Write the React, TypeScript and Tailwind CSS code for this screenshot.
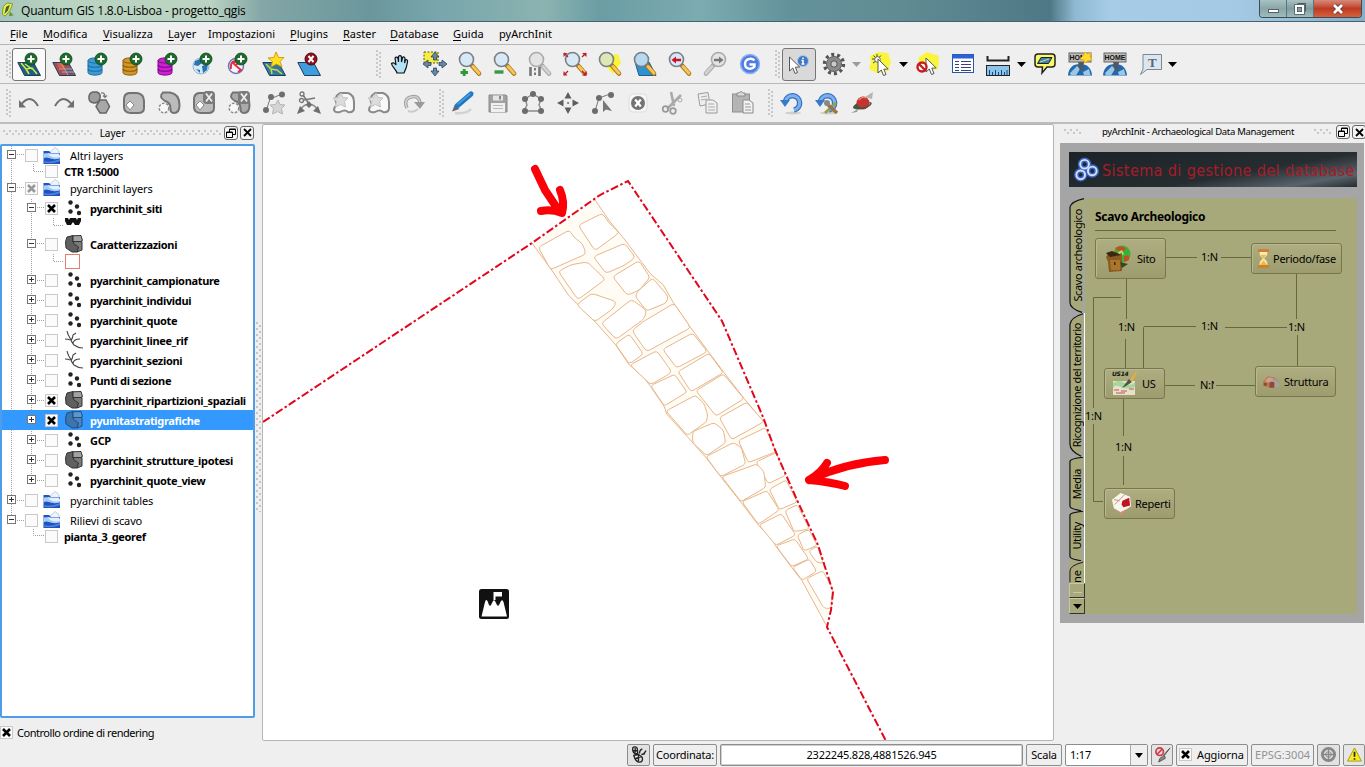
import React, { ReactNode } from "react";

type Pt = [number, number];

/* ---------- geometry helpers ---------- */

function roundedPath(points: Pt[], radius: number): string {
  const n = points.length;
  return (
    points
      .map((p, i) => {
        const a = points[(i + n - 1) % n];
        const b = points[(i + 1) % n];
        const toward = (q: Pt): Pt => {
          const len = Math.hypot(q[0] - p[0], q[1] - p[1]);
          const r = Math.min(radius, len / 2);
          return [p[0] + ((q[0] - p[0]) * r) / len, p[1] + ((q[1] - p[1]) * r) / len];
        };
        const s = toward(a);
        const e = toward(b);
        return `${i === 0 ? "M" : "L"}${s[0]} ${s[1]}Q${p[0]} ${p[1]} ${e[0]} ${e[1]}`;
      })
      .join("") + "Z"
  );
}

const upperStones: Pt[][] = [
  [[115, 292], [208, 240], [222, 262], [248, 282], [258, 312], [152, 359]],
  [[235, 226], [307, 190], [330, 222], [358, 248], [285, 302]],
  [[280, 320], [374, 280], [406, 322], [375, 345], [318, 370]],
  [[175, 364], [214, 344], [262, 336], [316, 388], [234, 449]],
  [[338, 380], [417, 332], [450, 382], [418, 420], [382, 436]],
  [[405, 438], [415, 422], [458, 384], [505, 440], [500, 458], [440, 483]],
  [[230, 464], [275, 430], [349, 455], [340, 475], [285, 515]],
  [[304, 520], [395, 448], [440, 482], [432, 507], [348, 568]],
  [[396, 542], [428, 516], [522, 460], [572, 533], [440, 605]],
  [[346, 582], [388, 552], [430, 612], [388, 642]],
  [[488, 598], [578, 549], [622, 605], [530, 654]],
  [[390, 645], [470, 602], [513, 662], [508, 672], [452, 704]],
];

const lowerStones: Pt[][] = [
  [[114, 65], [207, 10], [250, 68], [153, 125]],
  [[32, 107], [104, 73], [141, 126], [73, 168]],
  [[168, 122], [250, 72], [312, 146], [228, 198]],
  [[78, 183], [166, 136], [192, 160], [203, 195], [200, 215], [142, 256]],
  [[238, 203], [320, 157], [372, 215], [275, 269]],
  [[158, 245], [222, 218], [250, 240], [257, 278], [200, 317], [158, 278]],
  [[295, 272], [376, 233], [408, 305], [325, 338]],
  [[198, 320], [280, 278], [304, 292], [317, 342], [242, 380]],
  [[348, 336], [408, 308], [438, 375], [385, 401]],
  [[245, 380], [350, 342], [372, 365], [377, 412], [303, 455]],
  [[388, 418], [438, 390], [472, 456], [418, 479]],
  [[306, 455], [381, 422], [418, 480], [355, 523]],
  [[435, 482], [472, 464], [508, 537], [462, 545]],
  [[357, 525], [424, 491], [467, 555], [408, 586]],
  [[472, 555], [506, 538], [532, 586], [492, 603]],
  [[408, 588], [465, 567], [506, 627], [455, 650]],
  [[506, 603], [532, 588], [550, 640], [530, 637]],
  [[458, 652], [508, 627], [530, 664], [486, 691]],
  [[500, 686], [548, 662], [578, 716], [574, 775], [552, 775]],
];

function MapCanvas() {
  return (
    <svg className="block h-full w-full" viewBox="263 125 790 615" preserveAspectRatio="xMinYMin slice">
      <g stroke="#e4ae7c" strokeWidth="2.700">
        <g transform="translate(500 150) scale(.33333)">
          <path
            fill="#fffcf6"
            d="M95 278L155 360L205 435L285 515L345 582L388 645L430 680L452 710L493 770L500 792L562 860L620 925L662 980L723 1057L775 1125L810 1160L830 1192L875 1252L906 1292L980 1428L995 1350L998 1320L960 1220L890 1060L790 815L732 745L670 665L625 605L572 533L520 458L490 405L450 370L375 270L330 215L285 150Z"
            stroke="none"
          />
          <path
            fill="none"
            d="M95 278L155 360L205 435L285 515L345 582L388 645L430 680L452 710L493 770L500 792L562 860L620 925L662 980L723 1057L775 1125L810 1160L830 1192L875 1252L906 1292L980 1428M285 150L330 215L375 270L450 370L490 405L520 458L572 533L625 605L670 665L732 745L790 815"
          />
          {upperStones.map((s, i) => (
            <path key={i} fill="#fff" d={roundedPath(s, 10)} />
          ))}
        </g>
        <g transform="translate(640 350) scale(.33333)">
          {lowerStones.map((s, i) => (
            <path key={i} fill="#fff" d={roundedPath(s, 8)} />
          ))}
        </g>
      </g>
      <path
        d="M263 422L532 243L600 195L628 181L722 321L763 417L775 450L797 500L818 545L833 592L831 610L827 627L886 741"
        fill="none"
        stroke="#e2071c"
        strokeWidth="2"
        strokeDasharray="8 2.500 2.500 2.500"
      />
      <g fill="none" stroke="#fb0007" strokeWidth="8" strokeLinecap="round" strokeLinejoin="round">
        <path d="M535 169L545 190L557 208M560 190Q565 202 562 213Q552 209 541 211" />
        <path d="M885 460Q845 463 809 480M827 463Q821 473 809 480Q830 482 845 486" />
      </g>
      <rect x="479" y="589" width="30" height="30" rx="2.500" fill="#111" />
      <path d="M481.500 616.500L485 602Q486 598.500 487.500 601L489 605Q490 606.500 491 605L493 601Q494 599.500 495 601L497 605Q498 606.500 499 605L501 601Q502.500 599 503.500 602L507 616.500Z" fill="#fff" />
      <path d="M493.500 592H502V596.500H495.500V600H493.500Z" fill="#fff" />
    </svg>
  );
}

/* ---------- toolbar icons (24px grid) ---------- */

const Svg = ({ children, size = "h-6 w-6" }: { children: ReactNode; size?: string }) => (
  <svg viewBox="0 0 24 24" className={`${size} shrink-0 overflow-visible`} fill="none">
    {children}
  </svg>
);

const Plus = ({ y = 7 }: { y?: number }) => (
  <g transform={`translate(14 ${y})`}>
    <circle r="6" fill="#1c6b2c" stroke="#0d4519" strokeWidth=".8" />
    <path d="M-3.5 0H3.5M0-3.5V3.5" stroke="#fff" strokeWidth="2" />
  </g>
);

const Sheet = ({ fill }: { fill: string }) => (
  <path d="M.8 10.500H16.500L23.500 23.500H7.500Z" fill={fill} stroke="#223c5c" strokeWidth="1" />
);

const AddVector = () => (
  <Svg>
    <Sheet fill="#1d5f86" />
    <path d="M4 11L9 17L15 16L20 22M9 17L12 22M8 12L15 17" stroke="#d8ec38" strokeWidth="1.500" />
    <Plus />
  </Svg>
);
const AddRaster = () => (
  <Svg>
    <Sheet fill="#a05058" />
    <path d="M5 11H11L13 16H7Z" fill="#d65a4c" />
    <path d="M12 16H18L21 22H15Z" fill="#3c5f86" />
    <path d="M7 17H20M10 20H22M9 11L16 23" stroke="#d99a92" />
    <Plus />
  </Svg>
);
const Db = ({ fill, dark }: { fill: string; dark: string }) => (
  <Svg>
    <path d="M1 8.500V20.500C1 24 15 24 15 20.500V8.500Z" fill={fill} stroke={dark} />
    <ellipse cx="8" cy="8.500" rx="7" ry="2.600" fill={fill} stroke={dark} />
    <path d="M1 13C2 16 14 16 15 13M1 17C2 20 14 20 15 17" stroke={dark} strokeWidth="1.200" />
    <Plus />
  </Svg>
);
const AddWms = () => (
  <Svg>
    <circle cx="9" cy="14" r="8" fill="#d8e9f6" stroke="#8eb4d4" />
    <path d="M3 9L8 7L10 11L6 14L2 13ZM10 14L16 12L15 18L11 21ZM4 17L8 18L8 21Z" fill="#2873b4" />
    <Plus />
  </Svg>
);
const AddWfs = () => (
  <Svg>
    <circle cx="9" cy="14" r="7.500" fill="#f7f3f8" stroke="#6c74bc" strokeWidth="1.500" />
    <path d="M4 17Q3 10 8 9L12 11L8 13L14 18L11 20M6 12L9 9" stroke="#e02c40" strokeWidth="1.800" />
    <Plus />
  </Svg>
);
const NewLayer = () => (
  <Svg>
    <Sheet fill="#3178a0" />
    <path d="M4 12L9 17L15 18L20 22M9 17L10 22" stroke="#c2dc48" strokeWidth="1.500" />
    <path d="M14 0L16.500 5.500L22 5.500L18 9.500L20 15L14.500 12L9 15L10.500 9.500L6 6L12 5.500Z" fill="#ffe21c" stroke="#d99b10" />
  </Svg>
);
const RemoveLayer = () => (
  <Svg>
    <Sheet fill="#3d9ddd" />
    <circle cx="14" cy="7" r="6" fill="#8e1220" stroke="#500710" />
    <path d="M11.500 4L16.500 10M16.500 4L11.500 10" stroke="#fff" strokeWidth="2" />
  </Svg>
);
const Hand = () => (
  <Svg>
    <path
      d="M9 21C8 17 4 15 3.500 11.500C5 10 7 11 8 13L7 6C8 4.500 9.500 5 10 6.500L10.500 10L10.500 4.500C11.500 3 13 3.500 13.500 5V10L14.500 5.500C15.500 4.500 17 5 17 6.500L16.500 11L17.500 8C18.500 7 20 8 19.500 10C19 14 18 17 16 21Z"
      fill="#b4e2f4"
      stroke="#111"
      strokeWidth="1.200"
    />
  </Svg>
);
const arrows = "M12 0L16 5H13.500V8H10.500V5H8ZM12 24L16 19H13.500V16H10.500V19H8ZM0 12L5 8V10.500H8V13.500H5V16ZM24 12L19 8V10.500H16V13.500H19V16Z";
const PanSelection = () => (
  <Svg>
    <rect x="1" y="0" width="14" height="11" fill="#f5ec45" stroke="#605b10" strokeDasharray="2 1.500" />
    <path d={arrows} fill="#6488a8" stroke="#2c4358" strokeWidth=".8" />
  </Svg>
);
const Lens = ({ gray, mirror, fill = "#d7e8f7", children }: { gray?: boolean; mirror?: boolean; fill?: string; children?: ReactNode }) => (
  <g transform={mirror ? "translate(24 0) scale(-1 1)" : undefined}>
    <path d="M13.500 13L21 21.500" stroke={gray ? "#a4a4a4" : "#a5701c"} strokeWidth="4.600" strokeLinecap="round" />
    <path d="M15 14.500L21 21.200" stroke={gray ? "#d2d2d2" : "#f6c654"} strokeWidth="3" strokeLinecap="round" />
    <circle cx="8.500" cy="7.500" r="7" fill={gray ? "#e4e4e4" : fill} stroke={gray ? "#aaa" : "#7b7f84"} strokeWidth="1.600" />
    {children}
  </g>
);
const ZoomIn = () => (
  <Svg>
    <Lens />
    <path d="M2.500 20.500H10M6.200 17V24" stroke="#2c9a38" strokeWidth="2.800" />
  </Svg>
);
const ZoomOut = () => (
  <Svg>
    <Lens />
    <path d="M1.500 20H10.500" stroke="#3b9a40" strokeWidth="3.400" />
  </Svg>
);
const ZoomActual = () => (
  <Svg>
    <Lens gray />
    <path d="M2.500 15V24M11.500 15V24" stroke="#777" strokeWidth="2.600" />
    <path d="M7 16V18.500M7 20.500V23" stroke="#777" strokeWidth="2" />
  </Svg>
);
const ZoomFull = () => (
  <Svg>
    <g transform="translate(1 0)">
      <Lens />
    </g>
    <path d="M.5 5V1H4.500ZM19 1H23.500V5ZM.5 19V23.500H4.500ZM19 23.500H23.500V19Z" fill="#b8202e" />
    <path d="M1 1L5 5M23 1L19 5M1 23L5 19M23 23L19 19" stroke="#b8202e" strokeWidth="1.300" />
  </Svg>
);
const ZoomSel = () => (
  <Svg>
    <path d="M7 4L20 2L23 11L15 22L9 15Z" fill="#fbf33a" />
    <Lens fill="#dde8b6" />
  </Svg>
);
const ZoomLayer = () => (
  <Svg>
    <path d="M2 10H16L23 23.500H6Z" fill="#2b92d2" stroke="#235a86" />
    <Lens fill="#b8d8ef" />
  </Svg>
);
const ZoomLast = () => (
  <Svg>
    <Lens />
    <path d="M3.500 8L8 4.500V6.800H13V9.200H8V11.500Z" fill="#d01020" />
  </Svg>
);
const ZoomNext = () => (
  <Svg>
    <Lens gray mirror />
    <path d="M20.500 8L16 4.500V6.800H11V9.200H16V11.500Z" fill="#777" />
  </Svg>
);
const Refresh = () => (
  <Svg>
    <circle cx="12" cy="12" r="9.500" fill="#4f7ce0" stroke="#8fb0f0" strokeWidth="1.500" />
    <path d="M16.500 8.500C13.500 5.500 7 6.500 7 12C7 17.500 14 18 16.500 14.500V12.500H11.500" stroke="#fff" strokeWidth="2.400" />
  </Svg>
);
const cursor = "M0 0L0 14L3.300 11L5.500 16.500L8 15.500L5.800 10.200L10.200 10Z";
const Identify = () => (
  <Svg>
    <path d={cursor} transform="translate(2.500 5)" fill="#fff" stroke="#555" strokeWidth="1" />
    <circle cx="16" cy="9" r="5.500" fill="#3f79c4" stroke="#a8c6ea" />
    <path d="M16 5.500V7M14.500 8.500H16V12M14.500 12H17.500" stroke="#fff" strokeWidth="1.500" />
  </Svg>
);
const Gear = () => (
  <Svg>
    <circle cx="12" cy="12" r="9.500" stroke="#555" strokeWidth="3.400" strokeDasharray="3 2.960" />
    <circle cx="12" cy="12" r="7.500" fill="#8a8a8a" stroke="#5e5e5e" />
    <circle cx="12" cy="12" r="3.200" fill="#c9c9c9" stroke="#555" />
  </Svg>
);
const SelectFeature = () => (
  <Svg>
    <path d="M2 4L10 0L20 1L23 10L20 19L9 21L1 17L3 10Z" fill="#f8f53c" />
    <path d="M9 2V5M4 7H7M5.500 3.500L8 6M13 3.500L11 5.500M5 11L8 9" stroke="#444" />
    <circle cx="9.500" cy="7.500" r="2.800" fill="#fff" stroke="#666" />
    <path d={cursor} transform="translate(10 7)" fill="#fff" stroke="#555" />
  </Svg>
);
const Deselect = () => (
  <Svg>
    <path d="M3 5L11 0L23 4L22 17L12 18L2 16Z" fill="#f8f53c" />
    <path d={cursor} transform="translate(10 6)" fill="#fff" stroke="#555" />
    <circle cx="6" cy="15" r="4.500" fill="#fff" stroke="#c41e1e" strokeWidth="2.400" />
    <path d="M3 12L9 18" stroke="#c41e1e" strokeWidth="2.400" />
  </Svg>
);
const Table = () => (
  <Svg>
    <rect x="1.500" y="2.500" width="21" height="18" fill="#fff" stroke="#2a58a8" />
    <rect x="1.500" y="2.500" width="21" height="4" fill="#2b62dc" />
    <path d="M4 9.500H8M10 9.500H20M4 12.500H8M10 12.500H20M4 15.500H8M10 15.500H20M4 18.500H8M10 18.500H20" stroke="#39417c" />
  </Svg>
);
const Measure = () => (
  <Svg>
    <path d="M1.500 4V8.500H22.500V4" stroke="#222" strokeWidth="2" />
    <rect x=".5" y="13.500" width="23" height="10" fill="#8cc4ec" stroke="#222" />
    <path d="M3.500 23V18M6.500 23V20M9.500 23V18M12.500 23V20M15.500 23V18M18.500 23V20M21 23V18" stroke="#1c4a78" />
  </Svg>
);
const Tips = () => (
  <Svg>
    <path d="M5 2H19Q22 2 22 5V12Q22 15 19 15H14L9 21L9.500 15H5Q2 15 2 12V5Q2 2 5 2Z" fill="#fbf86a" stroke="#222" strokeWidth="1.500" />
    <path d="M8 5.500H19L15.500 11.500H4.500Z" fill="#3d7fc0" stroke="#222" />
    <path d="M7 10L16 7" stroke="#d6ea44" />
  </Svg>
);
const Home = ({ star }: { star?: boolean }) => (
  <Svg>
    <path d="M0 23.500Q1 12 12 12Q23 12 24 23.500Z" fill="#2468ac" />
    <path d="M2 21L9 14L12 17L8 23.500H3ZM15 20L21 17L22.500 23H16Z" fill="#9ac8e4" />
    <path d="M10 10H16L15 17L12 19Z" fill="#55565c" />
    <rect x="1" y="1" width="22" height="9" fill="#bdbdbd" stroke="#666" />
    <text x="12" y="8.300" fontFamily="Liberation Sans" fontWeight="bold" fontSize="7" fill="#111" textAnchor="middle">
      HOME
    </text>
    {star && <path d="M17 0L19 2L23 1L22 4.500L24 8L20 8.500L17 11L16 8L12 7L15 4Z" fill="#ffdb2c" stroke="#f3b112" />}
  </Svg>
);
const Annotation = () => (
  <Svg>
    <path d="M4 2.500H22.500V17.500H8L1.500 22.500L4 17Z" fill="#dbe6ee" stroke="#7b8790" />
    <text x="13.300" y="14.500" fontFamily="Liberation Serif" fontWeight="bold" fontSize="13" fill="#556878" textAnchor="middle">
      T
    </text>
  </Svg>
);

/* digitizing icons */
const Undo = () => (
  <Svg>
    <path d="M3 15Q13 1 21 15" stroke="#6f6f6f" strokeWidth="2" />
    <path d="M2 9V16.500H9Z" fill="#6f6f6f" />
  </Svg>
);
const Redo = () => (
  <Svg>
    <path d="M21 15Q11 1 3 15" stroke="#6f6f6f" strokeWidth="2" />
    <path d="M22 9V16.500H15Z" fill="#6f6f6f" />
  </Svg>
);
const Simplify = () => (
  <Svg>
    <path d="M6 1H10Q14 3 13 7Q12 12 7 12Q1 11 2 6Q2 2 6 1Z" fill="#9d9d9d" stroke="#666" strokeWidth="1.500" />
    <path d="M13 9H19L22.500 15.500L19 22H13L9 15.500Z" fill="#a8a8a8" stroke="#666" strokeWidth="1.500" />
    <path d="M14 2Q18 1 18 6M16 4.500L18 6.500L20 4.500" stroke="#777" strokeWidth="1.200" />
  </Svg>
);
const blob = "M7 2H15Q22 3 22 10V17Q22 22 16 22H9Q2 22 2 16V8Q2 3 7 2Z";
const AddRing = () => (
  <Svg>
    <path d={blob} fill="#bbb" stroke="#737373" strokeWidth="2" />
    <path d="M4 14L8 10L12 14L8 19Z" fill="#fff" stroke="#888" />
  </Svg>
);
const partShape = "M6 1.500H13Q22.500 3 22.500 14Q22.500 22 17 22Q13 22 13.500 17Q13 11 8 10Q1 6 6 1.500Z";
const Ring = () => <circle cx="7" cy="17" r="4.800" fill="#f8f8f8" stroke="#888" strokeDasharray="2.500 1.500" strokeWidth="1.500" />;
const AddPart = () => (
  <Svg>
    <path d={partShape} fill="#bbb" stroke="#737373" strokeWidth="2" />
    <Ring />
  </Svg>
);
const GrayX = () => (
  <g>
    <rect x="11" y="0" width="12" height="13" rx="4" fill="#7a7a7a" />
    <path d="M14 2.500L20 10.500M20 2.500L14 10.500" stroke="#eee" strokeWidth="1.800" />
  </g>
);
const DelRing = () => (
  <Svg>
    <path d={blob} fill="#bbb" stroke="#737373" strokeWidth="2" />
    <path d="M4 14L8 10L12 14L8 19Z" fill="#fff" stroke="#888" />
    <GrayX />
  </Svg>
);
const DelPart = () => (
  <Svg>
    <path d={partShape} fill="#aaa" stroke="#737373" strokeWidth="2" />
    <Ring />
    <GrayX />
  </Svg>
);
const star = "M16 9L18 13.500L23 14L19.500 17.500L20.500 23L15.500 20.500L10.500 23L11.500 17.500L8 14L13.500 13.500Z";
const Reshape = () => (
  <Svg>
    <path d="M4 20L8 8L20 3" stroke="#777" />
    <path d={star} fill="#d4d4d4" stroke="#b5b5b5" />
    <circle cx="4" cy="19" r="3" fill="#6e6e6e" />
    <circle cx="9" cy="6" r="3" fill="#6e6e6e" />
    <circle cx="20" cy="3.500" r="3" fill="#6e6e6e" />
  </Svg>
);
const Split = () => (
  <Svg>
    <path d="M3 20Q5 14 12 13Q19 14 21 20" stroke="#8a8a8a" strokeWidth="1.600" />
    <path d="M6 4L12 13M18 7L7 9" stroke="#777" strokeWidth="1.600" />
    <circle cx="5" cy="3" r="2" stroke="#777" strokeWidth="1.300" />
    <circle cx="4.500" cy="9.500" r="2" stroke="#777" strokeWidth="1.300" />
    <path d="M0 23L3 15L8 20ZM24 23L21 15L16 20ZM12 10L15 14L12 17L9 14Z" fill="#6e6e6e" />
  </Svg>
);
const Merge = () => (
  <Svg>
    <path d="M8 2H16Q22 4 22 11V18Q21 22 16 21Q13 18 8 21Q3 22 2 19Q2 16 5 14Q1 6 8 2Z" fill="#f8f8f8" stroke="#8a8a8a" strokeWidth="2" />
    <path d={star} transform="translate(-7 -7)" fill="#dcdcdc" stroke="#c2c2c2" />
  </Svg>
);
const Rotate = () => (
  <Svg>
    <path d="M5 17Q1 8 9 6Q17 4 18 12" stroke="#a4a4a4" strokeWidth="3.500" />
    <path d="M5 17Q1 8 9 6Q17 4 18 12" stroke="#d4d4d4" strokeWidth="1.300" />
    <path d="M12 11H23L18 18Z" fill="#9a9a9a" />
    <path d="M6 20Q12 22 16 18" stroke="#ccc" strokeWidth="2" />
  </Svg>
);
const Pencil = () => (
  <Svg>
    <path d="M4 22Q16 23 20 18" stroke="#d2d2d2" strokeWidth="2.500" />
    <path d="M6 15L20 3" stroke="#1f78c4" strokeWidth="5" strokeLinecap="round" />
    <path d="M7 13L19 3" stroke="#4ba4e6" strokeWidth="1.500" strokeLinecap="round" />
    <path d="M3.500 14.500L8.500 18L1 20.500Z" fill="#5d6b78" />
  </Svg>
);
const Save = () => (
  <Svg>
    <path d="M3 4H20L21 5V21H3Z" fill="#a2a2a2" stroke="#8a8a8a" />
    <rect x="7" y="4.500" width="10" height="5" fill="#e6e6e6" />
    <rect x="13" y="5" width="2" height="3.500" fill="#888" />
    <rect x="5" y="12" width="14" height="9" fill="#f0f0f0" />
    <path d="M7 14.500H17M7 17.500H17" stroke="#bbb" />
  </Svg>
);
const Node = ({ x, y }: { x: number; y: number }) => <circle cx={x} cy={y} r="3" fill="#6c6c6c" />;
const Capture = () => (
  <Svg>
    <path d="M4 8L12 3L20 8L18 14L21 20H3L6 14Z" stroke="#8a8a8a" strokeWidth="1.400" />
    <Node x={12} y={3} /><Node x={4} y={8} /><Node x={20} y={8} /><Node x={4} y={20} /><Node x={20} y={20} />
  </Svg>
);
const Move = () => (
  <Svg>
    <path d="M12 1L15.500 7.500H8.500ZM12 23L15.500 16.500H8.500ZM1 12L7.500 8.500V15.500ZM23 12L16.500 8.500V15.500Z" fill="#5e5e5e" />
    <path d="M12 12H12.100" stroke="#777" strokeWidth="2" strokeLinecap="round" />
  </Svg>
);
const NodeTool = () => (
  <Svg>
    <path d="M4 20L8 7L19 3" stroke="#777" />
    <Node x={4} y={20} /><Node x={8} y={7} /><Node x={20} y={4} />
    <path d="M12 9V21L15 18.500L21 20Z" fill="#777" />
  </Svg>
);
const DeleteSel = () => (
  <Svg>
    <rect x="3" y="3" width="18" height="18" rx="4" fill="#f7f7f7" stroke="#ddd" />
    <circle cx="12" cy="12" r="7" fill="#737373" />
    <path d="M9.200 8.500L14.800 15.500M14.800 8.500L9.200 15.500" stroke="#fff" strokeWidth="2.200" />
  </Svg>
);
const Cut = () => (
  <Svg>
    <path d="M10 1L13 15M20 4L6 18" stroke="#aaa" strokeWidth="2.600" />
    <circle cx="4.500" cy="18" r="2.800" stroke="#999" strokeWidth="1.700" />
    <circle cx="12" cy="20" r="2.800" stroke="#999" strokeWidth="1.700" />
    <circle cx="19" cy="9" r="2" stroke="#aaa" />
  </Svg>
);
const Copy = () => (
  <Svg>
    <path d="M2 3L12 1.500L14 13L4 15Z" fill="#eee" stroke="#9c9c9c" />
    <path d="M10 9H17L21 12V22H10Z" fill="#f0f0f0" stroke="#999" />
    <path d="M5 6L11 5M5 9L11 8M12 13H18M12 16H19M12 19H19" stroke="#aaa" />
  </Svg>
);
const Paste = () => (
  <Svg>
    <rect x="1.500" y="3" width="17" height="18" fill="#b4b4b4" stroke="#8e8e8e" />
    <path d="M6 5V2H8Q10-1 12 2H14V5Z" fill="#ddd" stroke="#888" />
    <path d="M12 9H18L22 12V22H12Z" fill="#f2f2f2" stroke="#8a8a8a" />
    <path d="M14 13H19M14 16H20M14 19H20" stroke="#999" />
  </Svg>
);
const BlueTurn = ({ tool }: { tool?: boolean }) => (
  <Svg>
    <ellipse cx="13" cy="22" rx="8" ry="1.500" fill="#cfcfcf" />
    <path d="M5.500 10A7.200 7.200 0 1 1 14 19" stroke="#3573c6" strokeWidth="5.500" />
    <path d="M5.500 10A7.200 7.200 0 1 1 14 19" stroke="#7fb0ec" strokeWidth="3" />
    <path d="M0 9H10L5 16Z" fill="#3a78cc" />
    {tool && (
      <g>
        <path d="M21 12L10 22" stroke="#93a34a" strokeWidth="3" />
        <path d="M11 12L22 22" stroke="#9a7348" strokeWidth="3.500" />
        <circle cx="12" cy="12" r="3" fill="#888" />
      </g>
    )}
  </Svg>
);
const Planet = () => (
  <Svg>
    <path d="M15 6L23 1L22 8Z" fill="#b4b4b4" />
    <circle cx="13" cy="12" r="6.500" fill="#c63430" />
    <path d="M9 9Q12 5 16 7" stroke="#ea8078" strokeWidth="1.500" />
    <path d="M7 12Q0 17 5 18Q12 20 20 15Q24 11 19 11Q22 14 14 16Q7 17 7 12Z" fill="#46583c" />
    <path d="M1 22L8 18L7 21Z" fill="#999" />
  </Svg>
);

/* ---------- toolbar building blocks ---------- */

const Handle = ({ className }: { className: string }) => (
  <div className={`flex shrink-0 items-center ${className}`}>
    <svg className="h-[30px] w-[6px] shrink-0" viewBox="0 0 6 30">
      {[0, 1, 2, 3, 4, 5, 6].map((i) => (
        <g key={i} fill="#c8c8c8">
          <rect x="0" y={i * 4 + 1} width="2" height="2" />
          <rect x="3" y={i * 4 + 3} width="2" height="2" />
        </g>
      ))}
    </svg>
  </div>
);
const Slot = ({ children }: { children: ReactNode }) => <div className="flex h-9 w-[35px] shrink-0 items-center justify-center">{children}</div>;
const Caret = ({ className }: { className: string }) => (
  <div className={`flex shrink-0 items-center justify-center ${className}`}>
    <svg viewBox="0 0 9 5" className="h-[5px] w-[9px]">
      <path d="M0 0H9L4.500 5Z" fill="currentColor" />
    </svg>
  </div>
);

const menus: [string, string, string, string][] = [
  ["", "F", "ile", "w-[33px]"],
  ["", "M", "odifica", "w-[60px]"],
  ["", "V", "isualizza", "w-[65px]"],
  ["", "L", "ayer", "w-[40px]"],
  ["Impo", "s", "tazioni", "w-[82px]"],
  ["", "P", "lugins", "w-[53px]"],
  ["", "R", "aster", "w-[47px]"],
  ["", "D", "atabase", "w-[63px]"],
  ["", "G", "uida", "w-[46px]"],
  ["pyArchInit", "", "", "w-[60px]"],
];

/* ---------- layer tree ---------- */

const Check = ({ state = "off" }: { state?: "off" | "on" | "part" }) => (
  <span className="flex size-[13px] shrink-0 items-center justify-center border border-[#c9c9c9] bg-[#fbfbfb]">
    {state !== "off" && (
      <svg viewBox="0 0 9 9" className="size-[9px]">
        <path d="M1 1L8 8M8 1L1 8" stroke={state === "on" ? "#000" : "#999"} strokeWidth="2.600" />
      </svg>
    )}
  </span>
);
const Expander = ({ open }: { open: boolean }) => (
  <svg viewBox="0 0 9 9" className="size-[9px] shrink-0">
    <rect x=".5" y=".5" width="8" height="8" fill="#fff" stroke="#777" />
    <path d={open ? "M2 4.500H7" : "M2 4.500H7M4.500 2V7"} stroke="#333" />
  </svg>
);
const Folder = () => (
  <svg viewBox="0 0 18 18" className="h-[18px] w-[18px] shrink-0">
    <path d="M7 5L12 .5L16 3.500V8H7Z" fill="#eef4fb" stroke="#b4c4dc" strokeWidth=".8" />
    <path d="M.5 4H6L8 6H17V17H.5Z" fill="#1f53c0" />
    <path d="M.5 6.500L6 6L8 8H17V11.500Q10 13 6 11Q3 10 .5 11.500Z" fill="#a8ccf6" />
    <path d="M5 6.500L16.500 6.500V10Q9 12 5 6.500Z" fill="#e4f1fd" />
    <path d="M.5 14Q8 16 17 12V14Q8 17.500 .5 15.500Z" fill="#4f83dc" />
  </svg>
);
const Points = () => (
  <svg viewBox="0 0 18 18" className="h-[18px] w-[18px] shrink-0">
    <g fill="#222">
      <circle cx="5.500" cy="3.500" r="2.200" /><circle cx="12" cy="7.500" r="2.200" /><circle cx="5.500" cy="12.500" r="2.200" /><circle cx="14" cy="14" r="2.200" />
    </g>
  </svg>
);
const Lines = () => (
  <svg viewBox="0 0 18 18" className="h-[18px] w-[18px] shrink-0" fill="none" stroke="#444" strokeWidth="1.100">
    <path d="M2 0Q3 4 5 7Q7 12 9 14Q13 17 18 17M0 8Q3 8 5 9M6 10Q8 6 8 4L11 2M8 12Q9 8 15 8" />
  </svg>
);
const Poly = ({ blue }: { blue?: boolean }) => (
  <svg viewBox="0 0 18 18" className="h-[18px] w-[18px] shrink-0" stroke={blue ? "#1d4f82" : "#333"}>
    <path d="M2 2L8 .5L8 7L13 9L14 12L12 17L7 17L1 13L.5 7Z" fill={blue ? "#3d74ac" : "#5f5f5f"} />
    <path d="M8 .8L16 .5L17.500 5.500L15 7L8 6.500Z" fill={blue ? "#5c97cf" : "#a2a2a2"} />
    <path d="M8 6.500L17 6.500L17 15L12 17L13.500 12L9 9Z" fill={blue ? "#4c85bf" : "#7a7a7a"} />
  </svg>
);

type Row = {
  h: string;
  label: string;
  depth: 0 | 1;
  open?: boolean;
  check?: "off" | "on" | "part";
  icon?: ReactNode;
  bold?: boolean;
  sel?: boolean;
};
const R = "h-5";
const rowsTop: Row[] = [
  { h: "h-[19px]", label: "Altri layers", depth: 0, open: true, icon: <Folder /> },
  { h: "h-3", label: "CTR 1:5000", depth: 1, bold: true },
  { h: "h-[22px]", label: "pyarchinit layers", depth: 0, open: true, check: "part", icon: <Folder /> },
  { h: "h-[18px]", label: "pyarchinit_siti", depth: 1, open: true, check: "on", icon: <Points />, bold: true },
];
const rowsMid: Row[] = [{ h: R, label: "Caratterizzazioni", depth: 1, open: true, icon: <Poly />, bold: true }];
const rowsEnd: Row[] = [
  { h: R, label: "pyarchinit_campionature", depth: 1, open: false, icon: <Points />, bold: true },
  { h: R, label: "pyarchinit_individui", depth: 1, open: false, icon: <Points />, bold: true },
  { h: R, label: "pyarchinit_quote", depth: 1, open: false, icon: <Points />, bold: true },
  { h: R, label: "pyarchinit_linee_rif", depth: 1, open: false, icon: <Lines />, bold: true },
  { h: R, label: "pyarchinit_sezioni", depth: 1, open: false, icon: <Lines />, bold: true },
  { h: R, label: "Punti di sezione", depth: 1, open: false, icon: <Points />, bold: true },
  { h: R, label: "pyarchinit_ripartizioni_spaziali", depth: 1, open: false, check: "on", icon: <Poly />, bold: true },
  { h: R, label: "pyunitastratigrafiche", depth: 1, open: false, check: "on", icon: <Poly blue />, bold: true, sel: true },
  { h: R, label: "GCP", depth: 1, open: false, icon: <Points />, bold: true },
  { h: R, label: "pyarchinit_strutture_ipotesi", depth: 1, open: false, icon: <Poly />, bold: true },
  { h: R, label: "pyarchinit_quote_view", depth: 1, open: false, icon: <Points />, bold: true },
  { h: R, label: "pyarchinit tables", depth: 0, open: false, icon: <Folder /> },
  { h: R, label: "Rilievi di scavo", depth: 0, open: true, icon: <Folder /> },
  { h: "h-3", label: "pianta_3_georef", depth: 1, bold: true },
];

const TreeRow = ({ row }: { row: Row }) => (
  <div
    className={`relative flex shrink-0 items-center whitespace-nowrap text-[11px] ${row.h} ${row.depth === 0 ? "pl-[5px]" : "pl-[25px]"} ${
      row.bold ? "font-bold tracking-[-0.33px]" : "tracking-[-0.12px]"
    } ${row.sel ? "bg-[#3399ff] text-white" : ""}`}
  >
    <span className="flex w-[18px] shrink-0 pb-[2px]">{row.open !== undefined && <Expander open={row.open} />}</span>
    <Check state={row.check} />
    {row.icon && <span className={`flex ${row.depth === 0 ? "mr-[9px] ml-[5px]" : "mr-[7px] ml-[7px]"}`}>{row.icon}</span>}
    <span className={row.icon ? "" : "ml-[6px]"}>{row.label}</span>
  </div>
);

/* ---------- dock title pieces ---------- */

const DockDots = ({ count }: { count: number }) => (
  <svg className="h-[6px] shrink-0" width={count * 6} height="6">
    {Array.from({ length: count }, (_, i) => (
      <g key={i} fill="#c8c8c8">
        <rect x={i * 6} y="0" width="2" height="2" />
        <rect x={i * 6 + 3} y="3" width="2" height="2" />
      </g>
    ))}
  </svg>
);
const DockButtons = () => (
  <div className="flex shrink-0 gap-[2px]">
    <span className="flex size-[14px] items-center justify-center rounded-[3px] border border-[#666] bg-[#f4f4f4]">
      <svg viewBox="0 0 10 10" className="size-[10px] shrink-0" fill="#f4f4f4" stroke="#000" strokeWidth="1">
        <path d="M3.500 1H9.500V6.500H3.500ZM3 1.500H10" />
        <path d="M.5 4H6.500V9.500H.5ZM0 4.500H7" />
      </svg>
    </span>
    <span className="flex size-[14px] items-center justify-center rounded-[3px] border border-[#666] bg-[#f4f4f4]">
      <svg viewBox="0 0 9 9" className="size-[9px] shrink-0" stroke="#000" strokeWidth="1.800">
        <path d="M1 1L8 8M8 1L1 8" />
      </svg>
    </span>
  </div>
);

/* ---------- database schema panel ---------- */

const NodeButton = ({ className, icon, label }: { className: string; icon: ReactNode; label: string }) => (
  <div
    className={`absolute flex items-center rounded-[3px] border border-[#77774f] bg-linear-to-b from-[#aeae82] to-[#9c9c6e] shadow-[inset_1px_1px_0_#b9b98e] ${className}`}
  >
    {icon}
    <span className="whitespace-nowrap">{label}</span>
  </div>
);
const Rel = ({ className, children }: { className: string; children: ReactNode }) => (
  <span className={`absolute whitespace-nowrap leading-[14px] ${className}`}>{children}</span>
);

const Schema = () => (
  <div className="relative h-[416px] w-[272px] bg-[#a8a97b] text-[11px] tracking-[-0.25px]">
    <svg className="absolute inset-0" width="272" height="416" fill="none" stroke="#68683f" strokeWidth="1">
      <path d="M10 32.500H251" />
      <path d="M81 59.500H112M136 59.500H166M41.500 80V121M40.500 141V170M36 99.500H8.500V210M8.500 226V303.500H18M211.500 75V121M212.500 137V168M58.500 170V129.500Q58.500 128.500 60 128.500H111M140 129.500H202M80 187.500H110M131 187.500H170M38.500 200V238M38.500 258V287" />
    </svg>
    <Rel className="top-[10px] left-[10px] text-[12px] leading-[18px] font-bold tracking-[-0.3px]">Scavo Archeologico</Rel>
    <NodeButton
      className="top-[40px] left-[10px] h-[41px] w-[71px] pl-2"
      label="Sito"
      icon={
        <svg viewBox="0 0 28 30" className="mr-[5px] h-[30px] w-[28px]">
          <circle cx="18" cy="10" r="8.500" fill="#3fae38" />
          <path d="M11 4Q18 0 22 5L17 9ZM20 12Q26 10 25 16L20 18Z" fill="#c64d22" />
          <path d="M14 8L18 6L20 10L16 13Z" fill="#a6e070" />
          <path d="M4 10L7 8L9 10L12 8L15 10L18 9L18 27L5 28L4 18L2 13Z" fill="#8a5a20" />
          <path d="M6 16H16V26H7Z" fill="#a9762c" />
          <path d="M2 9L8 7L17 11L6 13ZM10 18H11.500V21H10Z" fill="#3e2710" />
          <path d="M16 18L24 20L18 24Z" fill="#2f4a22" />
        </svg>
      }
    />
    <NodeButton
      className="top-[45px] left-[166px] h-[31px] w-[91px] pl-[5px]"
      label="Periodo/fase"
      icon={
        <svg viewBox="0 0 14 22" className="mr-[3px] h-[21px] w-[13px] shrink-0">
          <path d="M2 3Q2 8 6 11Q2 14 2 19H12Q12 14 8 11Q12 8 12 3Z" fill="#f6ecc8" stroke="#c9a95c" />
          <path d="M4 7H10L7 11ZM7 13L11 18H3Z" fill="#f0bc30" />
          <path d="M1 1H13V4H1ZM1 18H13V21H1Z" fill="#d07c34" />
        </svg>
      }
    />
    <NodeButton
      className="top-[170px] left-[19px] h-[31px] w-[61px] pl-[6px]"
      label="US"
      icon={
        <svg viewBox="0 0 27 27" className="mr-[4px] h-[27px] w-[27px] shrink-0">
          <rect x="2" y="11" width="22" height="14" fill="#e6e2c4" />
          <path d="M2 13Q8 9 14 13T24 12V17Q16 20 10 17T2 18Z" fill="#a6d79c" />
          <path d="M3 20H8M10 21H16M18 19H23M5 23H14" stroke="#cf7f8e" strokeWidth="1.500" />
          <path d="M11 18L18 9L21 12L15 16Z" fill="#4c5450" />
          <path d="M19 10L25 1L26 3L21 12Z" fill="#e5ad3c" />
          <text x="1" y="6" fontSize="6" fontWeight="bold" fontStyle="italic" fontFamily="DejaVu Sans" fill="#111">US14</text>
        </svg>
      }
    />
    <NodeButton
      className="top-[168px] left-[170px] h-[31px] w-[81px] pl-[6px]"
      label="Struttura"
      icon={
        <svg viewBox="0 0 19 16" className="mr-1 h-[16px] w-[18px] shrink-0">
          <path d="M1 8L6 2L13 3L18 8V13L8 14L1 12Z" fill="#b87858" />
          <path d="M3 7L7 3L12 4L8 9Z" fill="#d0a088" />
          <path d="M8 9L12 4L18 8V13L11 14Z" fill="#a6a0a0" />
          <path d="M8 8H13V14H8ZM2 9H5V12H2Z" fill="#8e4a30" />
        </svg>
      }
    />
    <NodeButton
      className="top-[290px] left-[19px] h-[31px] w-[71px] pl-[6px]"
      label="Reperti"
      icon={
        <svg viewBox="0 0 22 24" className="mr-[3px] h-[23px] w-[21px] shrink-0">
          <path d="M1 8L10 1L20 5L21 15L10 22L3 17Z" fill="#f8f4ee" />
          <path d="M4 13L14 3M3 8L9 9" stroke="#c28f70" />
          <path d="M12 9L19 6L20 14L13 16L11 13Z" fill="#bd1620" />
          <path d="M3 17L10 21L16 18L11 24Z" fill="#d98c80" />
        </svg>
      }
    />
    <Rel className="top-[52px] left-[116px]">1:N</Rel>
    <Rel className="top-[122px] left-[33px]">1:N</Rel>
    <Rel className="top-[121px] left-[116px]">1:N</Rel>
    <Rel className="top-[122px] left-[203px]">1:N</Rel>
    <Rel className="top-[180px] left-[115px] w-[14px] overflow-hidden">N:N</Rel>
    <Rel className="top-[211px] left-[0px]">1:N</Rel>
    <Rel className="top-[242px] left-[30px]">1:N</Rel>
  </div>
);

const Tab = ({ label, className, active }: { label: string; className: string; active?: boolean }) => (
  <div
    className={`relative flex w-4 shrink-0 items-center justify-center overflow-hidden ${className} ${active ? "" : "border-r border-white"}`}
  >
    <svg className="absolute inset-0 h-full w-full" preserveAspectRatio="none" viewBox="0 0 16 100">
      <path d="M15 .5Q2 3 1 8V91Q1 96 13 99.500" fill="#a8a97b" stroke="#111" strokeWidth="1.200" vectorEffect="non-scaling-stroke" />
    </svg>
    <span className="relative rotate-180 pr-px text-[11px] leading-[14px] tracking-[-0.36px] whitespace-nowrap [writing-mode:vertical-rl]">
      {label}
    </span>
  </div>
);

/* ---------- status bar ---------- */

const Cell = ({ className, children }: { className: string; children?: ReactNode }) => (
  <div className={`flex h-[22px] shrink-0 items-center rounded-[2px] border border-[#8d8d8d] pb-px whitespace-nowrap ${className}`}>{children}</div>
);

export default function App() {
  return (
    <div className="flex h-[767px] w-[1365px] flex-col overflow-hidden bg-[#efefef] font-['Noto_Sans','DejaVu_Sans',sans-serif] text-[11px] leading-none text-black">
      {/* title bar */}
      <header className="flex h-[22px] shrink-0 items-start border-b border-b-[#47616f] bg-[linear-gradient(90deg,#a5c4bb_0px,#b9d4c0_60px,#bad3c2_210px,#83a6a6_262px,#6b979c_370px,#78a6ac_440px,#8bb3b0_545px,#6a9da4_600px,#7cabb0_700px,#64929b_790px,#608b93_900px,#4f7886_1050px,#8fb8d2_1075px,#a6cce8_1110px,#a3c9e4_1240px,#88aec6_1365px)]">
        <svg viewBox="0 0 14 18" className="mt-[2px] ml-px h-[17px] w-[14px]">
          <path d="M2 5L6 1L12 2L9 9L4 15L1 13Z" fill="#f4ee50" stroke="#78972c" />
          <path d="M5 5L9 3L7 9L3 13Z" fill="#3a6b20" />
          <path d="M9 10L13 14L8 15Z" fill="#6d9528" />
        </svg>
        <h1 className="ml-[6px] pt-[4px] font-['Open_Sans','Noto_Sans',sans-serif] text-[12px] leading-[14px] tracking-[-0.18px] whitespace-nowrap">
          Quantum GIS 1.8.0-Lisboa - progetto_qgis
        </h1>
        <div className="mr-[3px] ml-auto flex h-[18px] overflow-hidden rounded-b-[4px] border border-t-0 border-[#3b4c56]">
          <span className="flex w-[27px] items-center justify-center border-r border-[#5b7480] bg-linear-to-b from-[#a9c2c2] via-[#8aa6a8] to-[#9dbcbc] pt-[5px]">
            <span className="h-[4px] w-[11px] border border-[#55606a] bg-white" />
          </span>
          <span className="flex w-[27px] items-center justify-center border-r border-[#5b7480] bg-linear-to-b from-[#a9c2c2] via-[#7f9c9e] to-[#9dbcbc]">
            <svg viewBox="0 0 12 12" className="size-3" fill="none">
              <path d="M3.500 .5H11.500V8.500" stroke="#4b555e" strokeWidth="1" />
              <rect x="2" y="3" width="7" height="7" stroke="#4b555e" strokeWidth="3.500" />
              <rect x="2" y="3" width="7" height="7" stroke="#fff" strokeWidth="2" />
            </svg>
          </span>
          <span className="flex w-[47px] items-center justify-center bg-linear-to-b from-[#d58a7a] via-[#c03a22] to-[#d4603c]">
            <svg viewBox="0 0 12 12" className="size-3">
              <path d="M2 2L10 10M10 2L2 10" stroke="#5a3a3a" strokeWidth="4.500" />
              <path d="M2 2L10 10M10 2L2 10" stroke="#fff" strokeWidth="2.800" />
            </svg>
          </span>
        </div>
      </header>

      {/* menu bar */}
      <nav className="flex h-[23px] shrink-0 items-center border-b border-[#b5b5b5] pt-px pl-[10px]">
        {menus.map(([pre, key, post, w]) => (
          <span key={pre + key + post} className={`shrink-0 text-[11px] whitespace-nowrap ${w}`}>
            {pre}
            <u className="underline-offset-2">{key}</u>
            {post}
          </span>
        ))}
      </nav>

      {/* main toolbar */}
      <div className="flex h-[39px] shrink-0 items-center border-b border-[#b9b9b9]">
        <Handle className="w-[12px] pl-[6px]" />
        <div className="flex h-[33px] w-[34px] shrink-0 items-center justify-center rounded-[3px] border border-[#757575] bg-[#fafafa]"><AddVector /></div>
        <Slot><AddRaster /></Slot>
        <Slot><Db fill="#3b9bd3" dark="#1f6fa6" /></Slot>
        <Slot><Db fill="#d39724" dark="#8a5c10" /></Slot>
        <Slot><Db fill="#cf1fd2" dark="#7d0d86" /></Slot>
        <Slot><AddWms /></Slot>
        <Slot><AddWfs /></Slot>
        <Slot><NewLayer /></Slot>
        <Slot><RemoveLayer /></Slot>
        <Handle className="w-[56px] pl-[50px]" />
        <Slot><Hand /></Slot>
        <Slot><PanSelection /></Slot>
        <Slot><ZoomIn /></Slot>
        <Slot><ZoomOut /></Slot>
        <Slot><ZoomActual /></Slot>
        <Slot><ZoomFull /></Slot>
        <Slot><ZoomSel /></Slot>
        <Slot><ZoomLayer /></Slot>
        <Slot><ZoomLast /></Slot>
        <Slot><ZoomNext /></Slot>
        <Slot><Refresh /></Slot>
        <Handle className="w-[15px] pl-[8px]" />
        <div className="flex h-[33px] w-[34px] shrink-0 items-center justify-center rounded-[3px] border border-[#757575] bg-[#d9d9d9]"><Identify /></div>
        <Slot><Gear /></Slot>
        <Caret className="w-[11px] text-[#9b9b9b]" />
        <Slot><SelectFeature /></Slot>
        <Caret className="w-[13px]" />
        <Slot><Deselect /></Slot>
        <Slot><Table /></Slot>
        <Slot><Measure /></Slot>
        <Caret className="w-[12px]" />
        <Slot><Tips /></Slot>
        <Slot><Home star /></Slot>
        <Slot><Home /></Slot>
        <div className="ml-[1px]"><Slot><Annotation /></Slot></div>
        <Caret className="w-[9px]" />
      </div>

      {/* digitizing toolbar */}
      <div className="flex h-[40px] shrink-0 items-center border-b-2 border-[#bdbdbd] pb-px">
        <Handle className="w-[11px] pl-[6px]" />
        <Slot><Undo /></Slot>
        <Slot><Redo /></Slot>
        <Slot><Simplify /></Slot>
        <Slot><AddRing /></Slot>
        <Slot><AddPart /></Slot>
        <Slot><DelRing /></Slot>
        <Slot><DelPart /></Slot>
        <Slot><Reshape /></Slot>
        <Slot><Split /></Slot>
        <Slot><Merge /></Slot>
        <Slot><Merge /></Slot>
        <Slot><Rotate /></Slot>
        <Handle className="w-[14px] pl-[8px]" />
        <Slot><Pencil /></Slot>
        <Slot><Save /></Slot>
        <Slot><Capture /></Slot>
        <Slot><Move /></Slot>
        <Slot><NodeTool /></Slot>
        <Slot><DeleteSel /></Slot>
        <Slot><Cut /></Slot>
        <Slot><Copy /></Slot>
        <Slot><Paste /></Slot>
        <Handle className="w-[14px] pl-[8px]" />
        <Slot><BlueTurn /></Slot>
        <Slot><BlueTurn tool /></Slot>
        <Slot><Planet /></Slot>
      </div>

      {/* work area */}
      <main className="flex h-[618px] shrink-0">
        <aside className="flex w-[255px] shrink-0 flex-col">
          <div className="flex h-[20px] shrink-0 items-center pb-[3px] pl-[3px]">
            <DockDots count={15} />
            <span className="w-[39px] shrink-0 text-center text-[10px]">Layer</span>
            <DockDots count={15} />
            <div className="ml-[2px]"><DockButtons /></div>
          </div>
          <div className="relative flex h-[574px] shrink-0 flex-col overflow-hidden rounded-[2px] border-2 border-[#4f9de8] bg-white">
            <svg className="absolute -top-px left-0" width="80" height="420" fill="none" stroke="#a0a0a0" strokeDasharray="1 1">
              <path d="M9.500 1V375M29.500 54V335M15 9.500H24M15 42.500H24M15 355.500H24M15 375.500H24M31.500 19V26.500H42M31.500 384V390.500H42M51.500 73V80.500H61M51.500 109V116.500H61" />
              <path d="M35 62.500H43M35 98.500H43M35 135.500H43M35 155.500H43M35 175.500H43M35 195.500H43M35 215.500H43M35 235.500H43M35 255.500H43M35 275.500H43M35 295.500H43M35 315.500H43M35 335.500H43" />
            </svg>
            {rowsTop.map((r) => <TreeRow key={r.label} row={r} />)}
            <div className="h-[17px] shrink-0 pt-px pl-[63px]">
              <svg viewBox="0 0 16 8" className="relative h-2 w-4">
                <path d="M0 0H16V3L14 7H10L8 4L6 7H2L0 3Z" fill="#111" />
                <path d="M3 0L4 2L5 0M11 0L12 2L13 0" fill="#fff" />
              </svg>
            </div>
            {rowsMid.map((r) => <TreeRow key={r.label} row={r} />)}
            <div className="h-[16px] shrink-0 pl-[63px]">
              <div className="relative size-[15px] border border-[#e08070] bg-white" />
            </div>
            {rowsEnd.map((r) => <TreeRow key={r.label} row={r} />)}
          </div>
          <div className="flex h-[24px] items-center pt-[5px]">
            <Check state="on" />
            <span className="ml-1 text-[11px] tracking-[-0.47px] whitespace-nowrap">Controllo ordine di rendering</span>
          </div>
        </aside>

        <div className="flex w-[7px] shrink-0 items-center justify-center pb-8">
          <svg width="5" height="190" fill="#c6c6c6">
            {Array.from({ length: 32 }, (_, i) => (
              <g key={i}>
                <rect x="0" y={i * 6} width="2" height="2" />
                <rect x="3" y={i * 6 + 3} width="2" height="2" />
              </g>
            ))}
          </svg>
        </div>

        <section className="h-[617px] w-[792px] shrink-0 rounded-[2px] border border-[#b5b5b5] bg-white">
          <MapCanvas />
        </section>

        <aside className="flex w-[311px] shrink-0 flex-col">
          <div className="flex h-[19px] shrink-0 items-center pb-[3px] pl-[10px]">
            <DockDots count={3} />
            <span className="w-[232px] shrink-0 text-center text-[9.5px] tracking-[-0.3px] whitespace-nowrap">pyArchInit - Archaeological Data Management</span>
            <DockDots count={3} />
            <div className="ml-[4px]"><DockButtons /></div>
          </div>
          <div className="ml-[6px] flex h-[480px] w-[304px] shrink-0 flex-col bg-[#a5a5a5] pt-[9px] pl-[9px]">
            <div className="flex h-[35px] w-[288px] shrink-0 items-center overflow-hidden bg-[linear-gradient(170deg,#1b2328_0%,#262d31_60%,#59626a_85%,#262c30_100%)]">
              <svg viewBox="0 0 28 28" className="ml-1 h-[28px] w-[27px] shrink-0" fill="none">
                <g stroke="#3b62c0" strokeWidth="5">
                  <circle cx="12" cy="8" r="4.500" /><circle cx="8" cy="19" r="4.500" /><circle cx="20" cy="15" r="4.500" />
                </g>
                <g stroke="#cfe0fa" strokeWidth="2">
                  <circle cx="12" cy="8" r="4.500" /><circle cx="8" cy="19" r="4.500" /><circle cx="20" cy="15" r="4.500" />
                </g>
              </svg>
              <span className="ml-[2px] pt-[3px] font-['DejaVu_Sans_Condensed','DejaVu_Sans',sans-serif] text-[16px] tracking-[0.4px] whitespace-nowrap text-[#a81c28]">
                Sistema di gestione del database
              </span>
            </div>
            <div className="mt-[11px] flex h-[416px] shrink-0">
              <div className="flex w-4 shrink-0 flex-col">
                <Tab active className="h-[115px]" label="Scavo archeologico" />
                <Tab className="h-[144px]" label="Ricognizione del territorio" />
                <Tab className="h-[54px]" label="Media" />
                <Tab className="h-[50px]" label="Utility" />
                <div className="relative flex h-[22px] shrink-0 justify-center overflow-hidden border-r border-white bg-[#a8a97b]">
                  <svg className="absolute inset-0 h-full w-full" viewBox="0 0 16 22">
                    <path d="M15 .5Q1 4 1 10V22" fill="none" stroke="#111" />
                  </svg>
                  <span className="relative mt-[12px] rotate-180 pr-px leading-[14px] [writing-mode:vertical-rl]">ne</span>
                </div>
                <span className="flex h-[15px] shrink-0 items-center justify-center border border-t-[#c9ca9c] border-r-[#333] border-b-[#333] border-l-[#c9ca9c] bg-[#a8a97b]">
                  <svg viewBox="0 0 9 5" className="h-[5px] w-[9px]"><path d="M0 4.500H9" stroke="#c8c8a4" /></svg>
                </span>
                <span className="flex h-[16px] shrink-0 items-center justify-center border border-t-[#c9ca9c] border-r-[#333] border-b-[#333] border-l-[#c9ca9c] bg-[#a8a97b]">
                  <svg viewBox="0 0 9 5" className="h-[5px] w-[9px]"><path d="M0 0H9L4.500 5Z" /></svg>
                </span>
              </div>
              <Schema />
            </div>
          </div>
        </aside>
      </main>

      {/* status bar */}
      <footer className="flex h-[25px] shrink-0 items-center gap-[3px] pt-px pl-[627px] text-[11px] tracking-[-0.2px]">
        <Cell className="w-[23px] justify-center bg-[#e2e2e2]">
          <svg viewBox="0 0 18 18" className="size-[17px]" fill="none" stroke="#222" strokeWidth="1.400">
            <path d="M3 5Q2 1 5 1Q8 1 8 5L8 8Q4 9 3 5ZM4 10L9 9L13 12Q14 17 10 17Q6 17 4 10ZM3.500 5H8M6 13L13 11M5.500 2V7M9 10V16M10 8Q10 4 13 3M14 9L17 5M12 9L16 8" />
          </svg>
        </Cell>
        <Cell className="w-[64px] justify-center">Coordinata:</Cell>
        <Cell className="w-[303px] justify-center bg-white shadow-[inset_0_0_0_1px_#cfcfcf]">2322245.828,4881526.945</Cell>
        <Cell className="w-[36px] justify-center">Scala</Cell>
        <Cell className="w-[83px] bg-white pl-1">
          1:17
          <span className="mt-px ml-auto flex h-[20px] w-[17px] items-center justify-center border-l border-[#aaa] bg-[#f0f0f0]">
            <svg viewBox="0 0 8 5" className="h-[5px] w-2"><path d="M0 0H8L4 5Z" /></svg>
          </span>
        </Cell>
        <Cell className="w-[22px] justify-center bg-[#e4e4e4]">
          <svg viewBox="0 0 18 18" className="size-[17px]" fill="none">
            <path d="M17 2L11 10L12 13L5 17Q5 13 9 11Z" fill="#888" stroke="#555" />
            <circle cx="6" cy="6" r="4" stroke="#d43a44" strokeWidth="1.800" />
            <path d="M3 9L9 3" stroke="#d43a44" strokeWidth="1.800" />
          </svg>
        </Cell>
        <Cell className="w-[72px] pl-[2px]">
          <Check state="on" />
          <span className="ml-[5px] tracking-[-0.1px]">Aggiorna</span>
        </Cell>
        <Cell className="w-[63px] justify-center tracking-[0px] text-[#929292]">EPSG:3004</Cell>
        <Cell className="w-[23px] justify-center bg-[#e2e2e2]">
          <svg viewBox="0 0 18 18" className="size-[17px]" fill="none" stroke="#888">
            <circle cx="9" cy="9" r="6.500" strokeWidth="3" />
            <circle cx="9" cy="9" r="3" />
            <path d="M9 1V17M1 9H17" strokeWidth="1.400" />
          </svg>
        </Cell>
        <Cell className="w-[22px] justify-center bg-[#e6e6e6]">
          <svg viewBox="0 0 16 16" className="size-[15px]">
            <path d="M8 1L15.500 15H.5Z" fill="#f8ec18" stroke="#a39a20" />
            <path d="M8 5V10.500M8 12V13.500" stroke="#222" strokeWidth="1.800" />
          </svg>
        </Cell>
      </footer>
    </div>
  );
}
